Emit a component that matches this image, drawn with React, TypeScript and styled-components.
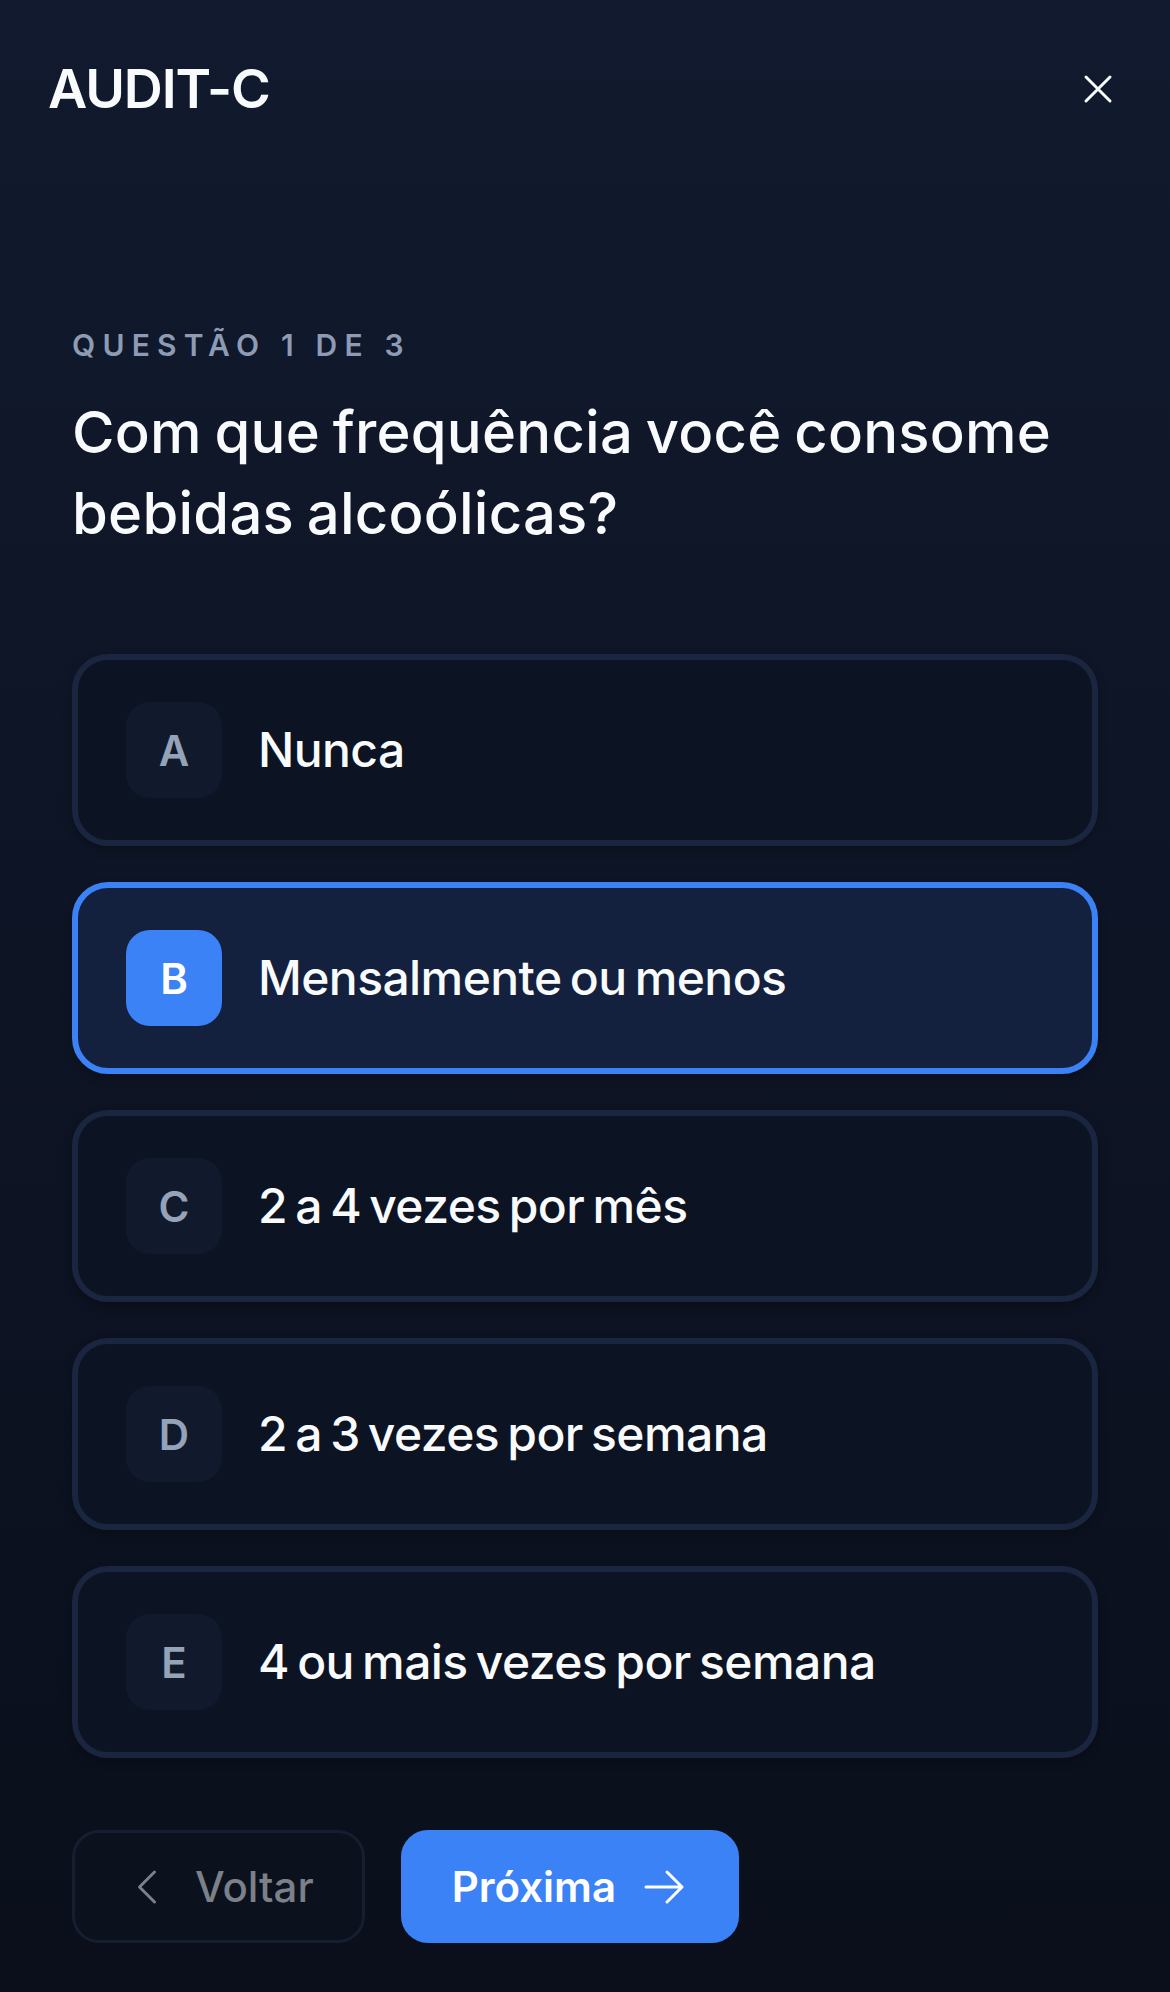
import React, { useState } from "react";
import styled, { createGlobalStyle, css } from "styled-components";

const GlobalStyle = createGlobalStyle`
  html, body {
    margin: 0;
    padding: 0;
  }
  body {
    background: #0a0f1b;
    font-family: Inter, "Noto Sans", "Liberation Sans", sans-serif;
    -webkit-font-smoothing: antialiased;
  }
  * {
    box-sizing: border-box;
  }
`;

const Screen = styled.div`
  width: 1170px;
  min-height: 1992px;
  display: flex;
  flex-direction: column;
  background: linear-gradient(180deg, #111a2e 0%, #0e1526 40%, #0a0f1b 100%);
  color: #f8fafc;
`;

const Header = styled.header`
  display: flex;
  align-items: center;
  justify-content: space-between;
  padding: 48px 48px 0 48px;
`;

const Title = styled.h1`
  margin: 0;
  font-size: 54px;
  line-height: 81px;
  font-weight: 600;
  letter-spacing: -0.02em;
  color: #f8fafc;
`;

const IconButton = styled.button`
  display: flex;
  align-items: center;
  justify-content: center;
  padding: 0;
  border: 0;
  background: none;
  color: #f8fafc;
  cursor: pointer;
`;

const Content = styled.main`
  display: flex;
  flex-direction: column;
  padding: 194px 72px 49px 72px;
`;

const Step = styled.p`
  margin: 0;
  font-size: 30px;
  line-height: 45px;
  font-weight: 600;
  letter-spacing: 0.24em;
  color: #8d9bb4;
  text-transform: uppercase;
`;

const Question = styled.h2`
  margin: 24px 0 0 0;
  font-size: 58px;
  line-height: 81px;
  font-weight: 500;
  letter-spacing: 0.004em;
  word-spacing: -3px;
  color: #f8fafc;
`;

const Options = styled.div`
  display: flex;
  flex-direction: column;
  gap: 36px;
  margin-top: 100px;
`;

const Option = styled.button<{ $active?: boolean }>`
  display: flex;
  align-items: center;
  gap: 36px;
  width: 100%;
  padding: 42px 48px;
  border: 6px solid #1a2540;
  border-radius: 36px;
  background: #0c1322;
  box-shadow: 0 4px 10px rgba(0, 0, 0, 0.25);
  font-family: inherit;
  text-align: left;
  cursor: pointer;

  ${(p) =>
    p.$active &&
    css`
      border-color: #3b82f6;
      background: #13213f;
    `}
`;

const Badge = styled.span<{ $active?: boolean }>`
  flex: none;
  display: flex;
  align-items: center;
  justify-content: center;
  width: 96px;
  height: 96px;
  border-radius: 24px;
  background: ${(p) => (p.$active ? "#3b82f6" : "#111a2d")};
  color: ${(p) => (p.$active ? "#ffffff" : "#94a3b8")};
  font-size: 42px;
  font-weight: 600;
`;

const OptionText = styled.span`
  font-size: 48px;
  line-height: 72px;
  font-weight: 500;
  letter-spacing: -0.012em;
  word-spacing: -4px;
  color: #f8fafc;
`;

const Footer = styled.div`
  display: flex;
  gap: 36px;
  margin-top: 72px;
`;

const NavButton = styled.button<{ $primary?: boolean }>`
  display: flex;
  align-items: center;
  gap: 24px;
  height: 113px;
  padding: 0 48px;
  border-radius: 27px;
  font-family: inherit;
  font-size: 42px;
  font-weight: 500;
  cursor: pointer;
  border: 3px solid #161e30;
  background: #0b111d;
  color: #7b8089;

  ${(p) =>
    p.$primary &&
    css`
      border-color: #3b82f6;
      background: #3b82f6;
      color: #ffffff;
      font-weight: 600;
    `}
`;

type IconProps = { d: string; size?: number };

function Icon({ d, size = 48 }: IconProps) {
  return (
    <svg
      width={size}
      height={size}
      viewBox="0 0 24 24"
      fill="none"
      stroke="currentColor"
      strokeWidth={1.5}
      strokeLinecap="round"
      strokeLinejoin="round"
    >
      <path d={d} />
    </svg>
  );
}

const options = [
  { key: "A", label: "Nunca" },
  { key: "B", label: "Mensalmente ou menos" },
  { key: "C", label: "2 a 4 vezes por mês" },
  { key: "D", label: "2 a 3 vezes por semana" },
  { key: "E", label: "4 ou mais vezes por semana" },
];

export default function App() {
  const [selected, setSelected] = useState("B");

  return (
    <>
      <GlobalStyle />
      <Screen>
        <Header>
          <Title>AUDIT-C</Title>
          <IconButton aria-label="Fechar">
            <Icon d="M6 18 18 6M6 6l12 12" />
          </IconButton>
        </Header>
        <Content>
          <Step>Questão 1 de 3</Step>
          <Question>Com que frequência você consome bebidas alcoólicas?</Question>
          <Options>
            {options.map((opt) => (
              <Option
                key={opt.key}
                $active={selected === opt.key}
                onClick={() => setSelected(opt.key)}
              >
                <Badge $active={selected === opt.key}>{opt.key}</Badge>
                <OptionText>{opt.label}</OptionText>
              </Option>
            ))}
          </Options>
          <Footer>
            <NavButton>
              <Icon d="M15.75 19.5 8.25 12l7.5-7.5" />
              Voltar
            </NavButton>
            <NavButton $primary>
              Próxima
              <Icon d="M13.5 4.5 21 12m0 0-7.5 7.5M21 12H3" />
            </NavButton>
          </Footer>
        </Content>
      </Screen>
    </>
  );
}
